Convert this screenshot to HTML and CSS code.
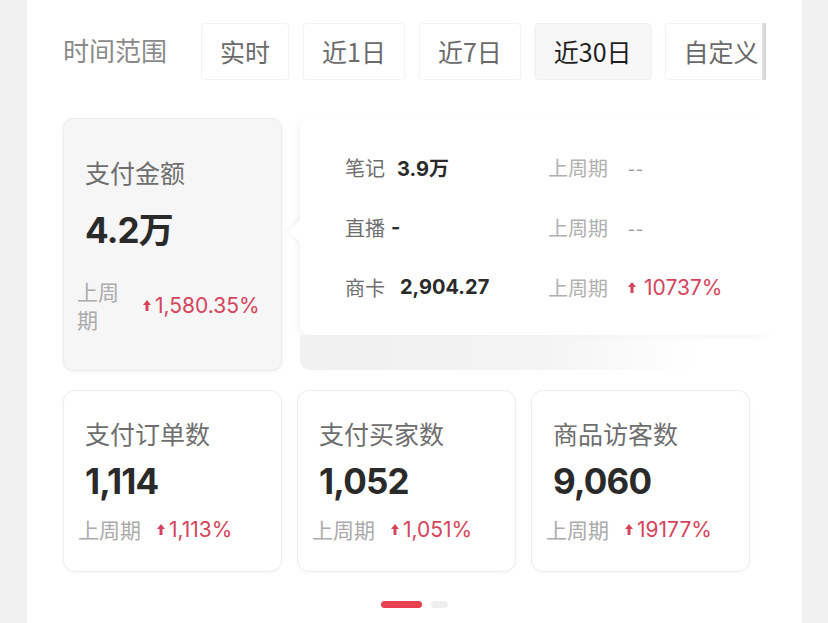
FILE: index.html
```html
<!DOCTYPE html>
<html lang="zh-CN">
<head>
<meta charset="utf-8">
<link rel="stylesheet" href="styles.css">
</head>
<body>
<div class="panel">
  <div class="range">
    <div class="range-label">时间范围</div>
    <div class="tabs">
      <div class="tab">实时</div>
      <div class="tab">近1日</div>
      <div class="tab">近7日</div>
      <div class="tab active">近30日</div>
      <div class="tab">自定义日期</div>
    </div>
  </div>

  <div class="grid top-row">
    <div class="card card-main">
      <div class="card-title">支付金额</div>
      <div class="card-value">4.2万</div>
      <div class="card-foot">
        <span class="prev prev-wrap">上周期</span>
        <span class="rate"><svg class="up" viewBox="0 0 8 11"><path d="M4 0L8 5H5.5V11H2.5V5H0Z"/></svg>1,580.35%</span>
      </div>
    </div>
    <div class="popover">
      <div class="pop-row">
        <div class="pop-left"><span class="pop-label">笔记</span><b class="pop-val">3.9万</b></div>
        <div class="pop-right"><span class="pop-prev">上周期</span><span class="pop-dash">--</span></div>
      </div>
      <div class="pop-row">
        <div class="pop-left"><span class="pop-label">直播</span><b class="pop-val tight">-</b></div>
        <div class="pop-right"><span class="pop-prev">上周期</span><span class="pop-dash">--</span></div>
      </div>
      <div class="pop-row">
        <div class="pop-left"><span class="pop-label">商卡</span><b class="pop-val wide">2,904.27</b></div>
        <div class="pop-right"><span class="pop-prev">上周期</span><span class="rate pop-rate"><svg class="up" viewBox="0 0 8 11"><path d="M4 0L8 5H5.5V11H2.5V5H0Z"/></svg>10737%</span></div>
      </div>
    </div>
  </div>

  <div class="grid bottom-row">
    <div class="card">
      <div class="card-title">支付订单数</div>
      <div class="card-value">1,114</div>
      <div class="card-foot">
        <span class="prev">上周期</span>
        <span class="rate"><svg class="up" viewBox="0 0 8 11"><path d="M4 0L8 5H5.5V11H2.5V5H0Z"/></svg>1,113%</span>
      </div>
    </div>
    <div class="card">
      <div class="card-title">支付买家数</div>
      <div class="card-value">1,052</div>
      <div class="card-foot">
        <span class="prev">上周期</span>
        <span class="rate"><svg class="up" viewBox="0 0 8 11"><path d="M4 0L8 5H5.5V11H2.5V5H0Z"/></svg>1,051%</span>
      </div>
    </div>
    <div class="card">
      <div class="card-title">商品访客数</div>
      <div class="card-value">9,060</div>
      <div class="card-foot">
        <span class="prev">上周期</span>
        <span class="rate"><svg class="up" viewBox="0 0 8 11"><path d="M4 0L8 5H5.5V11H2.5V5H0Z"/></svg>19177%</span>
      </div>
    </div>
  </div>

  <div class="dots">
    <span class="dot on"></span>
    <span class="dot"></span>
  </div>
</div>
</body>
</html>
```

FILE: styles.css
```css
* { box-sizing: border-box; }

html, body {
  margin: 0;
  height: 100%;
}

body {
  background: #f1f1f1;
  font-family: "Noto Sans CJK SC", "Noto Sans", sans-serif;
  overflow: hidden;
}

.panel {
  margin-left: 27px;
  width: 775px;
  height: 623px;
  background: #ffffff;
  padding: 23px 0 0 36px;
}

.range {
  display: flex;
  align-items: center;
  height: 57px;
}

.range-label {
  font-size: 26px;
  line-height: 36px;
  margin-top: -4px;
  color: #8a8a8a;
  width: 138px;
  flex: none;
}

.tabs {
  position: relative;
  display: flex;
  gap: 14px;
  width: 565px;
  height: 57px;
  overflow: hidden;
}

.tabs::after {
  content: "";
  position: absolute;
  right: 0;
  top: 0;
  width: 4px;
  height: 100%;
  background: linear-gradient(to right, #e6e6e6, #cfcfcf);
}

.tab {
  flex: none;
  height: 57px;
  display: flex;
  align-items: center;
  padding: 0 18px 2px;
  font-size: 25px;
  color: #6a6a6a;
  background: #fff;
  border: 1px solid #f3f3f3;
  border-radius: 4px;
  box-shadow: 0 1px 3px rgba(0, 0, 0, 0.03);
}

.tab.active {
  background: #f7f7f7;
  color: #1f1f1f;
  border-color: #efefef;
  box-shadow: 0 1px 4px rgba(0, 0, 0, 0.06);
}

.grid {
  display: grid;
  grid-template-columns: 219px 219px 219px;
  column-gap: 15px;
}

.top-row {
  position: relative;
  margin-top: 38px;
  height: 253px;
}

.bottom-row {
  margin-top: 19px;
}

.card {
  background: #fff;
  border: 1px solid #ededed;
  border-radius: 12px;
  padding: 24px 0 0 21px;
  height: 182px;
  box-shadow: 0 1px 4px rgba(0, 0, 0, 0.03);
}

.card-title {
  font-size: 25px;
  line-height: 36px;
  color: #6e6e6e;
}

.card-value {
  margin-top: 8px;
  font-family: "Inter", "Noto Sans CJK SC", sans-serif;
  font-size: 35px;
  line-height: 44px;
  font-weight: 700;
  color: #2a2a2a;
  letter-spacing: -0.8px;
}

.card-foot {
  margin-top: 11px;
  margin-left: -7px;
  display: flex;
  align-items: center;
  gap: 16px;
}

.prev {
  font-size: 21px;
  line-height: 30px;
  color: #ababab;
}

.rate {
  display: inline-flex;
  align-items: center;
  font-family: "Inter", "Noto Sans CJK SC", sans-serif;
  font-size: 21px;
  color: #d4445c;
  white-space: nowrap;
}

.up {
  width: 8px;
  height: 11px;
  fill: #d4445c;
  margin-right: 4px;
}

.card-main {
  height: 253px;
  background: #f6f6f6;
  border-color: #ebebeb;
  padding-top: 35px;
  border-radius: 10px;
  box-shadow: 0 1px 5px rgba(0, 0, 0, 0.05);
}

.card-main .card-value {
  margin-top: 18px;
}

.card-main .card-foot {
  margin-top: 25px;
  margin-left: -8px;
  gap: 22px;
}

.prev-wrap {
  width: 44px;
  line-height: 28px;
}

.popover {
  position: absolute;
  left: 237px;
  top: 0;
  width: 470px;
  height: 217px;
  background: #fff;
  border-radius: 10px;
  padding: 19px 0 0 45px;
  box-shadow: -3px 2px 6px rgba(0, 0, 0, 0.045);
  z-index: 2;
}

.popover::before {
  content: "";
  position: absolute;
  left: -8px;
  top: 104px;
  width: 18px;
  height: 18px;
  background: #fff;
  transform: rotate(45deg);
  box-shadow: -2px 2px 3px rgba(0, 0, 0, 0.04);
}

.popover::after {
  content: "";
  position: absolute;
  left: 0;
  top: 100%;
  width: 420px;
  height: 35px;
  border-bottom-left-radius: 10px;
  background: linear-gradient(to right, #f0f0f0 0%, #f3f3f3 55%, rgba(255, 255, 255, 0) 95%);
  z-index: -1;
}

.pop-row {
  position: relative;
  display: flex;
  align-items: center;
  height: 60px;
}

.pop-left {
  width: 203px;
  display: flex;
  align-items: center;
}

.pop-label {
  font-size: 20px;
  color: #6e6e6e;
}

.pop-val {
  font-family: "Inter", "Noto Sans CJK SC", sans-serif;
  font-size: 20px;
  font-weight: 700;
  color: #2a2a2a;
  margin-left: 12px;
}

.pop-val.tight { margin-left: 6px; }
.pop-val.wide { margin-left: 15px; }

.pop-right {
  display: flex;
  align-items: center;
}

.pop-prev {
  font-size: 20px;
  color: #b0b0b0;
  width: 80px;
}

.pop-dash {
  font-size: 20px;
  color: #9a9a9a;
  letter-spacing: 1px;
}

.pop-rate .up { margin-right: 8px; }

.dots {
  margin-top: 29px;
  display: flex;
  justify-content: center;
  gap: 9px;
  padding-right: 36px;
}

.dot {
  width: 17px;
  height: 7px;
  border-radius: 4px;
  background: #eeeeee;
}

.dot.on {
  width: 41px;
  background: #e8404f;
}
```
